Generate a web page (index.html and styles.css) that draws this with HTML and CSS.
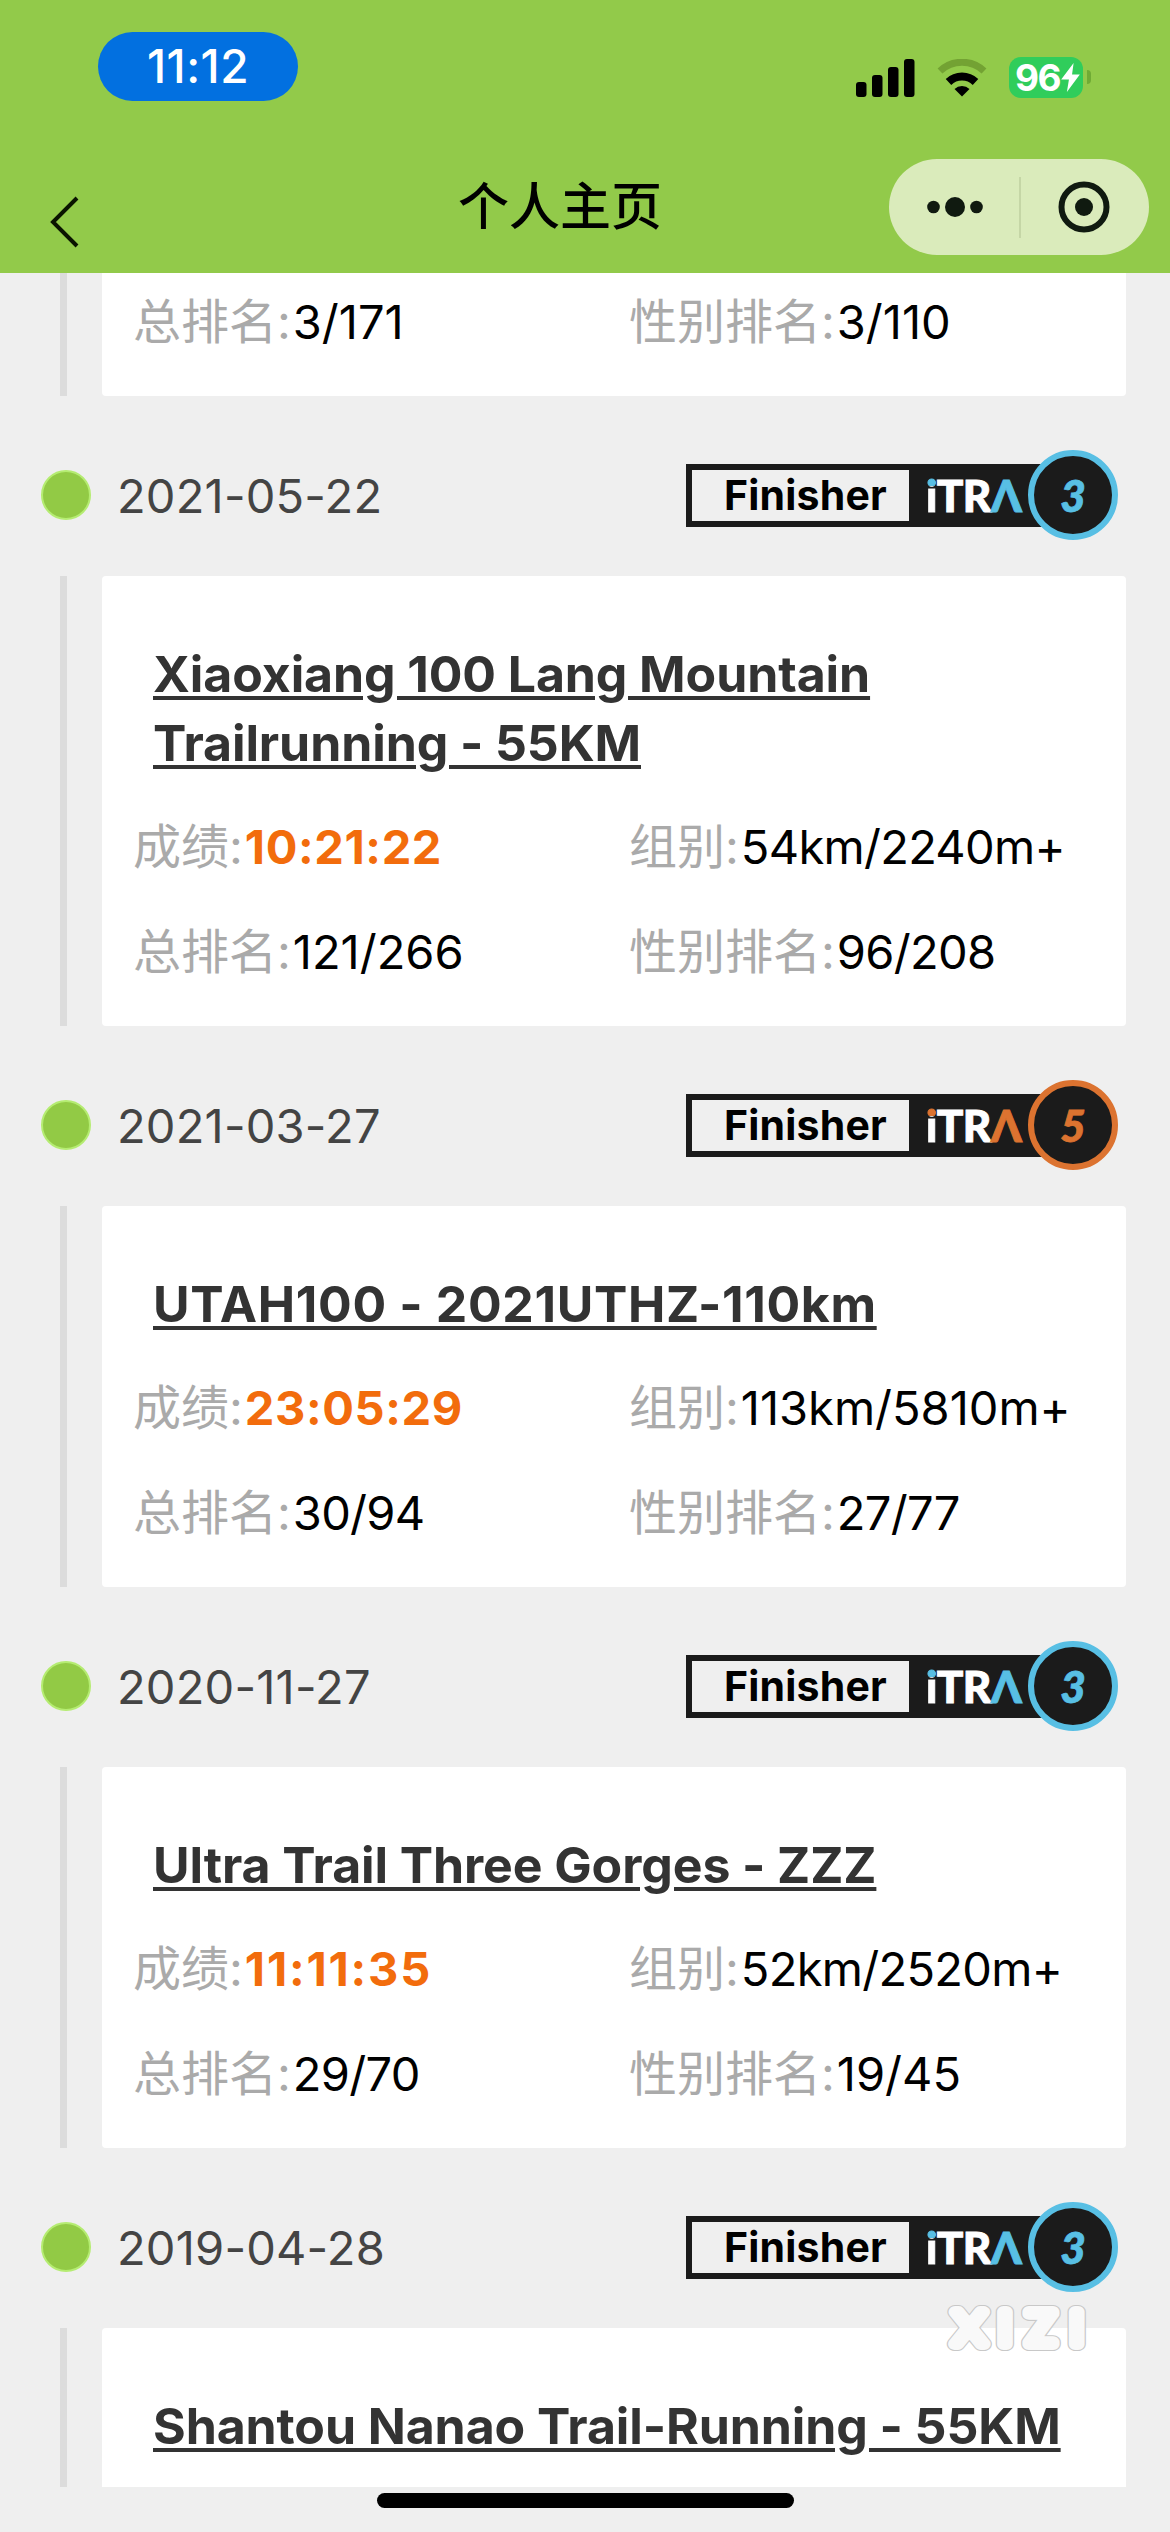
FILE: index.html
```html
<!DOCTYPE html>
<html lang="zh-CN">
  <head>
    <meta charset="UTF-8" />
    <meta name="viewport" content="width=device-width, initial-scale=1.0" />
    <title>个人主页</title>
    <link rel="stylesheet" href="styles.css">
  </head>
  <body>
    <header class="header">
      <div class="status-bar">
        <div class="time">11:12</div>
        <div class="status-icons">
          <svg class="signal" width="59" height="38" viewBox="0 0 59 38">
            <rect x="0" y="23" width="10.5" height="15" rx="3" />
            <rect x="16" y="16" width="10.5" height="22" rx="3" />
            <rect x="32" y="8" width="10.5" height="30" rx="3" />
            <rect x="48" y="0" width="10.5" height="38" rx="3" />
          </svg>
          <svg class="wifi" width="50" height="38" viewBox="0 0 50 38">
            <path d="M3 12 A32 32 0 0 1 47 12" fill="none" stroke="#73a233" stroke-width="7" />
            <path d="M11.5 23 A19.5 19.5 0 0 1 38.5 23" fill="none" stroke="#000" stroke-width="8" />
            <path d="M25 37.5 L17.5 30 A11 11 0 0 1 32.5 30 Z" />
          </svg>
          <div class="battery">
            <span>96</span>
            <svg width="19" height="29" viewBox="0 0 18 28">
              <path d="M12 0 L0 16 H7.5 L5.5 28 L18 11 H10.5 Z" fill="#fff" />
            </svg>
          </div>
        </div>
      </div>
      <div class="nav-bar">
        <svg class="back" width="32" height="54" viewBox="0 0 32 54">
          <path d="M28 3 L4 27 L28 51" fill="none" stroke="#0a1400" stroke-width="4" />
        </svg>
        <h1>个人主页</h1>
        <div class="capsule">
          <svg width="56" height="24" viewBox="0 0 56 24">
            <circle cx="6.5" cy="12" r="6.3" />
            <circle cx="28" cy="12" r="10" />
            <circle cx="49.5" cy="12" r="6.3" />
          </svg>
          <span class="divider"></span>
          <svg width="52" height="52" viewBox="0 0 52 52">
            <circle cx="26" cy="26" r="22.5" fill="none" stroke="#101a10" stroke-width="6" />
            <circle cx="26" cy="26" r="9" />
          </svg>
        </div>
      </div>
    </header>

    <main class="timeline">
      <section class="entry">
        <div class="card card-cut">
          <dl>
            <div><dt>总排名:</dt><dd>3/171</dd></div>
            <div><dt>性别排名:</dt><dd>3/110</dd></div>
          </dl>
        </div>
      </section>

      <section class="entry">
        <div class="entry-head">
          <span class="dot"></span>
          <time>2021-05-22</time>
          <div class="badge blue">
            <span class="finisher">Finisher</span>
            <span class="itra"><i>i</i>TR<b>Λ</b></span>
            <span class="points">3</span>
          </div>
        </div>
        <div class="card">
          <h2>Xiaoxiang 100 Lang Mountain Trailrunning - 55KM</h2>
          <dl>
            <div><dt>成绩:</dt><dd class="result">10:21:22</dd></div>
            <div><dt>组别:</dt><dd class="tight">54km/2240m+</dd></div>
            <div><dt>总排名:</dt><dd>121/266</dd></div>
            <div><dt>性别排名:</dt><dd class="tight">96/208</dd></div>
          </dl>
        </div>
      </section>

      <section class="entry">
        <div class="entry-head">
          <span class="dot"></span>
          <time>2021-03-27</time>
          <div class="badge orange">
            <span class="finisher">Finisher</span>
            <span class="itra"><i>i</i>TR<b>Λ</b></span>
            <span class="points">5</span>
          </div>
        </div>
        <div class="card">
          <h2 class="loose">UTAH100 - 2021UTHZ-110km</h2>
          <dl>
            <div><dt>成绩:</dt><dd class="result">23:05:29</dd></div>
            <div><dt>组别:</dt><dd>113km/5810m+</dd></div>
            <div><dt>总排名:</dt><dd class="tight">30/94</dd></div>
            <div><dt>性别排名:</dt><dd class="tight">27/77</dd></div>
          </dl>
        </div>
      </section>

      <section class="entry">
        <div class="entry-head">
          <span class="dot"></span>
          <time>2020-11-27</time>
          <div class="badge blue">
            <span class="finisher">Finisher</span>
            <span class="itra"><i>i</i>TR<b>Λ</b></span>
            <span class="points">3</span>
          </div>
        </div>
        <div class="card">
          <h2>Ultra Trail Three Gorges - ZZZ</h2>
          <dl>
            <div><dt>成绩:</dt><dd class="result loose">11:11:35</dd></div>
            <div><dt>组别:</dt><dd class="tight">52km/2520m+</dd></div>
            <div><dt>总排名:</dt><dd class="tight">29/70</dd></div>
            <div><dt>性别排名:</dt><dd>19/45</dd></div>
          </dl>
        </div>
      </section>

      <section class="entry">
        <div class="entry-head">
          <span class="dot"></span>
          <time>2019-04-28</time>
          <div class="badge blue">
            <span class="finisher">Finisher</span>
            <span class="itra"><i>i</i>TR<b>Λ</b></span>
            <span class="points">3</span>
          </div>
        </div>
        <div class="card">
          <h2>Shantou Nanao Trail-Running - 55KM</h2>
        </div>
      </section>
    </main>

    <footer class="home-bar"><span></span></footer>

    <svg class="watermark" width="144" height="54" viewBox="0 0 144 54">
      <g transform="scale(1.14 1)" font-size="44" font-weight="200" text-anchor="middle" stroke-linejoin="round">
        <text x="23 54.4 86 117.2" y="43" stroke="#c8c8c8" stroke-width="14">XIZI</text>
        <text x="23 54.4 86 117.2" y="43" stroke="#f9f9f9" stroke-width="11.8">XIZI</text>
      </g>
    </svg>
  </body>
</html>
```
FILE: styles.css
```css
* {
  box-sizing: border-box;
}
body {
  position: relative;
  display: flex;
  flex-direction: column;
  width: 1170px;
  height: 2532px;
  margin: 0;
  overflow: hidden;
  background: #efefef;
  color: #000;
  font-family: Inter, "Noto Sans CJK SC", sans-serif;
}
h1,
h2,
dl,
dd {
  margin: 0;
}
svg {
  display: block;
}

/* Header */
.header {
  flex: none;
  height: 273px;
  background: #92ca4a;
}
.status-bar {
  display: flex;
  justify-content: space-between;
  height: 159px;
  padding: 32px 87px 0 98px;
}
.time {
  width: 200px;
  height: 69px;
  border-radius: 35px;
  background: #0270e0;
  color: #fff;
  font-size: 46px;
  font-weight: 500;
  line-height: 69px;
  letter-spacing: 0.5px;
  text-align: center;
}
.status-icons {
  display: flex;
  align-items: center;
  height: 91px;
}
.wifi {
  margin: 0 22px 0 22px;
}
.battery {
  position: relative;
  display: flex;
  align-items: center;
  gap: 1px;
  width: 74px;
  height: 41px;
  padding-left: 6px;
  border-radius: 12px;
  background: #30cd5b;
  color: #fff;
  font-size: 37px;
  font-weight: 700;
  letter-spacing: -1.5px;
}
.battery::after {
  content: "";
  position: absolute;
  right: -8px;
  top: 13px;
  width: 4px;
  height: 14px;
  border-radius: 0 4px 4px 0;
  background: #6fab35;
}
.nav-bar {
  display: grid;
  grid-template-columns: 458px 1fr 260px;
  height: 96px;
  padding-right: 21px;
}
.back {
  margin: 36px 0 0 49px;
}
h1 {
  font-size: 51px;
  font-weight: 500;
  line-height: 96px;
}
.capsule {
  display: flex;
  align-items: center;
  justify-content: space-between;
  padding: 0 39px 0 38px;
  border-radius: 48px;
  background: #daebbb;
  fill: #101a10;
}
.divider {
  width: 2px;
  height: 61px;
  margin-right: 2px;
  background: #c5d6a6;
}

/* Timeline */
.timeline {
  flex: none;
  height: 2214px;
  overflow: hidden;
}
.entry-head {
  display: flex;
  align-items: center;
  height: 180px;
  padding: 18px 52px 0 41px;
}
.dot {
  width: 50px;
  height: 50px;
  border: 2px solid #b5ec72;
  border-radius: 50%;
  background: #92ca45;
}
time {
  margin-left: 26px;
  color: #444;
  font-size: 47px;
  letter-spacing: 0.2px;
}

.badge {
  position: relative;
  display: flex;
  height: 63px;
  width: 387px;
  margin-left: auto;
  margin-right: 45px;
  border: 6px solid #1b1b1b;
  background: #1b1b1b;
}
.blue {
  --level: #58bfe4;
}
.orange {
  --level: #dc7330;
}
.finisher {
  width: 217px;
  padding-left: 32px;
  background: #efefef;
  font-size: 41px;
  font-weight: 700;
  line-height: 50px;
  letter-spacing: 0.2px;
}
.itra {
  margin-left: 17px;
  color: #fff;
  font-family: Lato, sans-serif;
  font-size: 44px;
  font-weight: 900;
  line-height: 51px;
  letter-spacing: -0.5px;
  -webkit-text-stroke: 1px;
}
.itra i {
  background: linear-gradient(var(--level) 17px, #fff 17px);
  background-clip: text;
  color: transparent;
  font-style: normal;
}
.itra b {
  color: var(--level);
}
.points {
  position: absolute;
  right: -51px;
  top: -20px;
  width: 90px;
  height: 90px;
  border: 6px solid var(--level);
  border-radius: 50%;
  background: #1b1b1b;
  color: var(--level);
  font-family: Lato, sans-serif;
  font-size: 44px;
  font-style: italic;
  font-weight: 900;
  line-height: 79px;
  text-align: center;
  -webkit-text-stroke: 0.8px;
}

.card {
  position: relative;
  margin: 0 44px 0 102px;
  padding: 64px 31px 22px;
  border-radius: 4px;
  background: #fff;
}
.card::before {
  content: "";
  position: absolute;
  left: -42px;
  top: 0;
  bottom: 0;
  width: 7px;
  background: #dcdcdc;
}
.card-cut {
  margin-top: -4px;
  padding-top: 0;
}
h2 {
  padding: 0 20px;
  margin-bottom: 16px;
  color: #333;
  font-size: 50px;
  font-weight: 700;
  line-height: 69px;
  letter-spacing: -0.1px;
  text-decoration: underline;
  text-decoration-thickness: 4px;
  text-underline-offset: 4px;
}
h2.loose {
  letter-spacing: 0.65px;
}
dl {
  display: grid;
  grid-template-columns: 496px 1fr;
  font-size: 47px;
  line-height: 105px;
}
dl div {
  display: flex;
  white-space: nowrap;
}
dt {
  margin-right: 2px;
  color: #aaa;
  font-size: 48px;
}
dd.tight {
  letter-spacing: -0.7px;
}
.result {
  color: #f26c0c;
  font-weight: 700;
  letter-spacing: 0.6px;
}
.result.loose {
  letter-spacing: 1.8px;
}

.home-bar {
  display: flex;
  justify-content: center;
  padding-top: 6px;
}
.home-bar span {
  width: 417px;
  height: 15px;
  border-radius: 8px;
  background: #000;
}
.watermark {
  position: absolute;
  left: 943px;
  top: 2301px;
}
```
